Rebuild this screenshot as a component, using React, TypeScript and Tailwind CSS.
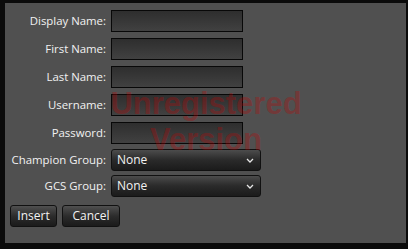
const font = { fontFamily: '"Open Sans", "Noto Sans", sans-serif' };

function Field({ label, top }: { label: string; top: string }) {
  return (
    <div className={`flex items-center ${top}`}>
      <div className="w-[106px] pr-[5px] text-right text-[11.4px] text-[#f2f2f2]">{label}</div>
      <div className="h-[22px] w-[132px] border border-[#080808] bg-gradient-to-b from-[#2e2e2e] to-[#414141]" />
    </div>
  );
}

function Select({ label, top }: { label: string; top: string }) {
  return (
    <div className={`flex items-center ${top}`}>
      <div className="w-[106px] pr-[5px] text-right text-[11.4px] text-[#f2f2f2]">{label}</div>
      <div className="flex h-[22px] w-[150px] items-center justify-between rounded-[3px] border border-[#111] bg-gradient-to-b from-[#4c4c4c] via-[#2a2a2a] to-[#1b1b1b] pl-[5px] pr-[6px]">
        <span className="text-[12px] text-[#f2f2f2]">None</span>
        <svg width="8" height="5" viewBox="0 0 8 5">
          <path d="M1 1 L4 4 L7 1" stroke="#e6e6e6" strokeWidth="1.3" fill="none" />
        </svg>
      </div>
    </div>
  );
}

function Button({ label, width }: { label: string; width: string }) {
  return (
    <div className={`flex h-[22px] ${width} items-center justify-center rounded-[3px] border border-[#111] bg-gradient-to-b from-[#505050] via-[#2c2c2c] to-[#1b1b1b] text-[12px] text-[#f2f2f2]`}>
      {label}
    </div>
  );
}

export default function App() {
  return (
    <div className="h-[249px] w-[408px] overflow-hidden bg-[#0b0b0b] pl-[5px] pt-[3px]" style={font}>
      <div className="relative h-[240px] w-[401px] bg-[#505050] pt-[7px]">
        <Field label="Display Name:" top="" />
        <Field label="First Name:" top="mt-[6px]" />
        <Field label="Last Name:" top="mt-[6px]" />
        <Field label="Username:" top="mt-[6px]" />
        <Field label="Password:" top="mt-[6px]" />
        <Select label="Champion Group:" top="mt-[5px]" />
        <Select label="GCS Group:" top="mt-[4px]" />
        <div className="mt-[8px] flex gap-[5px] pl-[5px]">
          <Button label="Insert" width="w-[47px]" />
          <Button label="Cancel" width="w-[58px]" />
        </div>
        <div
          className="pointer-events-none absolute left-[101px] top-[83px] w-[200px] text-center text-[31px] font-bold leading-[36px] text-[rgba(200,0,0,0.3)]"
          style={{ fontFamily: '"Liberation Sans", Arial, sans-serif' }}
        >
          Unregistered
          <br />
          Version
        </div>
      </div>
    </div>
  );
}
